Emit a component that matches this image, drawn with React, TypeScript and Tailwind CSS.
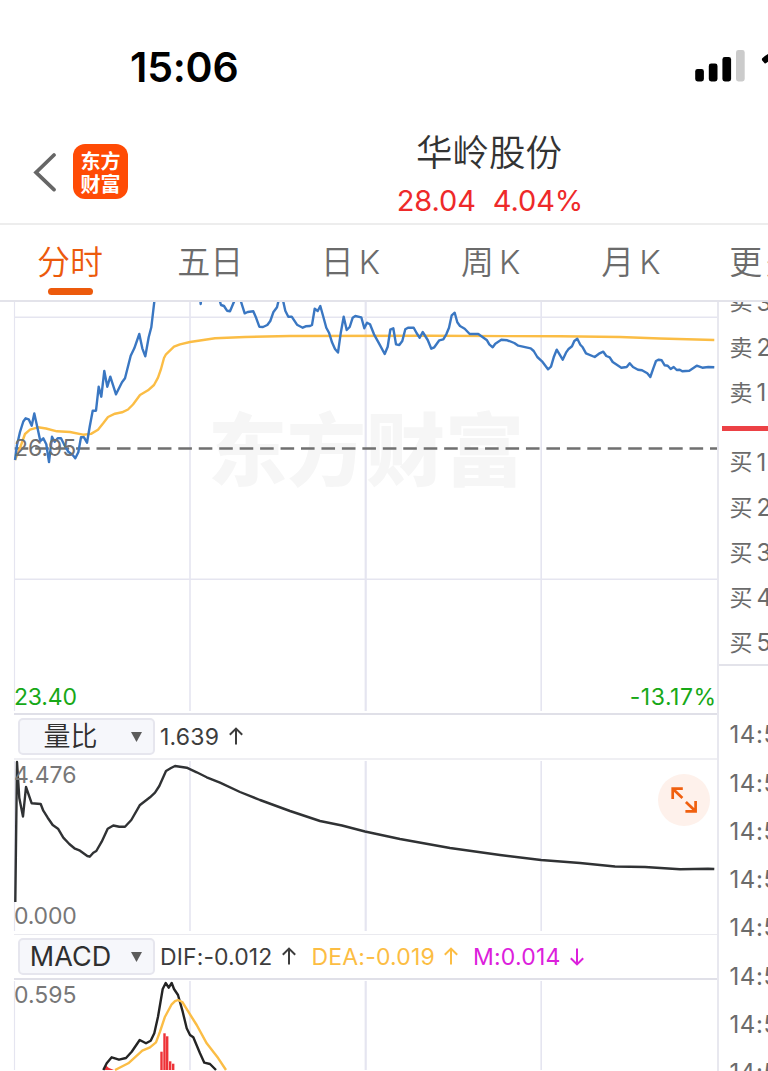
import type { ReactNode } from "react";

const tabs = ["五日", "日K", "周K", "月K"];
const asks = ["3", "2", "1"];
const bids = ["1", "2", "3", "4", "5"];
const ticks = ["14:59", "14:58", "14:58", "14:57", "14:56", "14:56", "14:55", "14:55"];
const macdBars = [
  [160.3, 1051.7],
  [163.3, 1033.3],
  [166, 1036.3],
  [169, 1061.3],
  [172, 1063.7],
];

const priceLine =
  "15,460 17,445 20,432 23.3,421.5 25.7,418.3 28.7,419.3 31.7,425.7 34.3,413.5 37,425.7 40.3,441 43.3,438.3 46.3,444.3 49,462 52,436.7 54.7,441.7 57.7,438.3 61,438.3 64,444.3 68.3,451.7 72.7,455 75.3,458.3 78.3,452.3 81,437.3 84,437.3 87,442.7 89.7,426.7 92.7,410.7 96,410.7 98.7,386.7 101.3,396.7 104.3,371 107.3,386.7 110.3,376.7 116,394.3 122,382.3 125,378.3 130.7,355.7 134.3,348.3 139.3,334 142.3,348.3 145.3,356.3 148.7,337.3 151.3,327.3 154.3,301.7 157,280 198,280 200.7,304 203,280 216,280 220,301.7 221,305 224,306 227,310.7 230,311.3 234,301.7 237,294 241,301.7 244.7,313.3 247.7,312 253.3,311.3 256.3,318.3 259.3,326.7 263,327 267.3,325 270.3,321 273.3,312.3 277,307.3 278.3,301.7 281,294 283.3,301.7 285.3,310.7 288.3,316.7 291.7,316.7 297,324.7 302.7,327.7 305.7,326.3 310,326 312,325 314.7,308.7 317.7,311 320.3,306 323.3,316.7 326.3,327.7 329,332.7 332,342.3 335,349 338,352.5 340.7,333.3 343.7,316.7 346.7,330 349.7,327 352.7,317.7 355.3,316 361.3,317.3 364.3,328.3 367,322.7 370,324.3 374,334.3 379,343.3 384.7,354 387.7,346.7 390.3,329.7 393.3,328.3 396,344.3 399.3,345 402.3,341 405.3,329.3 408,327.7 413.7,327.7 416.7,333.3 419.7,337.7 422.7,332 427.7,340 431.3,348.7 434.3,347.3 439.3,340.3 443.3,339.3 446.3,334.3 449,327.7 451.7,315.3 454.7,312.7 457.3,322.3 460,326 464.7,328.7 469.7,334 478.3,334 487,340.3 489.3,344.3 492.7,347.3 495.3,343.7 501.3,339.7 507.3,340.3 514.3,343 518.3,345.7 530.7,348.3 533.7,351 537.3,357 542,361.3 548,369.3 551,366.7 553.7,357.3 556.7,349.7 562.7,359.7 566,352.7 568.3,349.3 572,346.3 574.3,341 577.3,338.7 580.3,344.7 582.7,347.3 586,353.3 594.7,357 599,353.7 603.3,351.7 606.3,356 609.7,357.3 612.7,362 621.3,367.7 626.7,367 629.7,363.3 633,367 638,369.7 642,370.3 647.3,373.3 650.3,377 653.3,368.3 656,361 658.7,359.7 661.7,360.3 664.7,365.3 667.7,365.7 670.7,369 673.7,367 676.7,370 679.7,369.7 682.3,371.3 689.3,370.7 692.3,368.7 696.7,365.7 702.3,367.7 708.3,367 714.3,367.3";
const averageLine =
  "15,460 20,448 25,434 30,429.7 38,427.3 46,428.5 57,431.3 70,432 83,434.7 91,433.9 98,429.7 103,423.5 108,417 115,413.7 122,412.3 128,409.5 133,404.5 140,395 148,390.3 154,385 158,377.7 161,369 164,358 166,354.3 174,346.7 180,344.3 190,342 200,340.5 215,338.3 245,337 290,336 430,335.8 560,336.3 620,337 660,338.5 714.3,340";
const ratioLine =
  "15.3,902 17,762 19.3,798 23,816.5 26,787 31.7,803.3 40.7,804 43.3,810.7 47.7,817.7 52.7,825 58,828.7 63.3,837.7 69.3,844 75,848.7 80,850.7 87.3,856 89.7,856.7 93.3,852.7 96.3,851 101.7,841.7 107.7,828.7 113.3,825.5 119.3,826.7 125,826.7 131.3,820 139.7,805.3 150,797.3 155,792.7 159.3,786 166,771 171,768 175,766 186.7,767.7 196.7,772.3 206.7,777.3 220,782.7 240,792 260,800 290,811 320,821 342,825.5 365,831.5 400,839 450,848 500,855 541,860 580,863 615,866.5 645,867 680,869.3 708,868.7 714.3,869";
const difLine =
  "103.3,1070 106.7,1063.3 111.7,1057.3 119,1059.7 126,1058 131.7,1051.7 139.7,1040 146,1043.3 150.7,1040.7 154.3,1033.3 158,1016.7 162.7,989 165.7,983 168.7,987.7 171.7,983 174,989 178,995 182.7,1011.7 186.7,1028.3 190,1035 193.3,1037.3 200,1053.3 204.3,1062.7 210,1064 216,1070";
const deaLine =
  "115,1070 128.3,1063.3 142.3,1050.7 150,1047.3 156,1042.3 160,1031.7 165,1016.7 171.7,1004.3 175,1001.2 178,1000 182.3,1002 188.3,1011.7 196.7,1025 206.7,1043.3 218.3,1058.3 226,1070";

function GridLines({ top, bottom }: { top: number; bottom: number }) {
  return (
    <g stroke="#e5e5f0">
      <line x1="14.5" x2="14.5" y1={top} y2={bottom} strokeWidth="1.2" />
      <line x1="190" x2="190" y1={top} y2={bottom} strokeWidth="1.6" />
      <line x1="365.7" x2="365.7" y1={top} y2={bottom} strokeWidth="2.2" />
      <line x1="541.2" x2="541.2" y1={top} y2={bottom} strokeWidth="1.6" />
    </g>
  );
}

function Line({ points, color }: { points: string; color: string }) {
  return <polyline points={points} fill="none" stroke={color} strokeWidth="2.4" strokeLinejoin="round" />;
}

function Arrow({ down = false }: { down?: boolean }) {
  return (
    <svg
      viewBox="0 0 14 18"
      className={down ? "h-[18px] w-[14px] rotate-180" : "mb-[2px] h-[18px] w-[14px]"}
      fill="none"
      stroke="currentColor"
      strokeWidth="2"
    >
      <path d="M7 17.5V1.5M.8 7.8 7 1.6l6.2 6.2" />
    </svg>
  );
}

function IndicatorBar({ name, children }: { name: ReactNode; children: ReactNode }) {
  return (
    <div className="flex h-[43px] items-center pl-[18px] text-[23px]">
      <button className="flex h-[37px] w-[137px] items-center rounded-[5px] border-2 border-[#e6e6ee] bg-[#f6f7fb] text-[#2f2f2f]">
        <span className="flex w-[101px] justify-center">{name}</span>
        <svg viewBox="0 0 11 10" className="ml-[10px] h-[10px] w-[11px] fill-[#5c5c5c]">
          <path d="M0 0h11L5.5 10z" />
        </svg>
      </button>
      {children}
    </div>
  );
}

export default function App() {
  return (
    <div className="h-[1071px] w-[768px] overflow-hidden bg-white font-['Inter','Noto_Sans_CJK_SC',sans-serif] text-[#6b6b6b]">
      <div className="flex h-[110px] items-start justify-between pl-[130px] text-black">
        <span className="mt-[42px] text-[41px] leading-[50px] font-semibold tracking-[-0.2px]">15:06</span>
        <svg viewBox="0 0 74 32" className="mt-[50px] h-8 w-[74px]">
          <rect x="1.2" y="19" width="8.7" height="12.5" rx="2.4" />
          <rect x="14.8" y="13.6" width="8.7" height="17.9" rx="2.4" />
          <rect x="28.4" y="7" width="8.7" height="24.5" rx="2.4" />
          <rect x="42" width="8.7" height="31.5" rx="2.4" fill="#cbcbcb" />
          <path d="M68.3 8.3Q71 5.5 75 3.5v7.5l-2.8 2.1q-1 .7-1.8-.2l-2.2-2.5q-.7-1 .1-2.1z" />
        </svg>
      </div>

      <header className="flex h-[115px] border-b-2 border-[#ededed]">
        <div className="flex w-[128px] shrink-0 items-start pl-[33px]">
          <svg viewBox="0 0 24 40" className="mt-[42px] h-10 w-6" fill="none" stroke="#666" strokeWidth="3.7" strokeLinecap="round">
            <path d="M21 3 3 20.4 21 37.6" strokeLinejoin="miter" />
          </svg>
          <div className="mt-[34px] ml-4 flex h-[55px] w-[55px] shrink-0 items-center justify-center rounded-[12px] bg-[#ff4b05] font-['Noto_Sans_CJK_SC',sans-serif] text-[20px] leading-[23px] font-bold text-white">
            <span className="w-10">东方财富</span>
          </div>
        </div>
        <div className="flex w-[722px] shrink-0 flex-col items-center">
          <h1 className="mt-[21px] text-[36.5px] leading-[44px] font-[350] text-[#333]">华岭股份</h1>
          <p className="mt-[9px] ml-[2px] flex gap-[17px] text-[29px] leading-[34px] tracking-[-0.1px] text-[#ee2a2a]">
            <span>28.04</span>
            <span>4.04%</span>
          </p>
        </div>
      </header>

      <nav className="flex h-[77px] border-b-2 border-[#e3e3ea] text-[33px] leading-[48px] font-[350]">
        <div className="flex w-[140px] shrink-0 flex-col items-center pt-[13px] text-[#ec5a0c]">
          <span>分时</span>
          <i className="mt-[2px] h-[7px] w-[45px] rounded-full bg-[#ec5a0c]" />
        </div>
        {tabs.map((tab) => (
          <div key={tab} className="w-[140.3px] shrink-0 pt-[13px] text-center">
            {tab.replace("K", "")}
            {tab.includes("K") && <span className="ml-[5px] text-[33px]">K</span>}
          </div>
        ))}
        <div className="shrink-0 pt-[13px] pl-[28px] tracking-[2.5px]">更多</div>
      </nav>

      <div className="flex h-[769px] overflow-hidden">
        <main className="w-[718.5px] shrink-0 border-r-2 border-[#e8e8ef] text-[23px] leading-[28px]">
          <section className="relative h-[411px]">
            <svg viewBox="0 302 717 411" className="block h-[411px] w-[717px]">
              <text x="208" y="480" fontSize="79" fontWeight="900" fill="#f6f6f6" fontFamily="Noto Sans CJK SC">
                东方财富
              </text>
              <GridLines top={302} bottom={711} />
              <path d="M14 317.2H717M14 579.2H717" stroke="#e5e5f0" strokeWidth="1.6" />
              <path d="M14.7 448.5H717" stroke="#707070" strokeWidth="2.4" strokeDasharray="13.6 6.85" />
              <Line points={averageLine} color="#fbbd45" />
              <Line points={priceLine} color="#3a77c2" />
            </svg>
            <span className="absolute top-[132px] left-[14px] text-[#707070]">26.95</span>
            <span className="absolute top-[381px] left-[14px] tracking-[-0.2px] text-[#17a817]">23.40</span>
            <span className="absolute top-[381px] right-0 tracking-[0.5px] text-[#17a817]">-13.17%</span>
          </section>

          <div className="ml-[14px] h-[2px] bg-[#e0e0e8]" />
          <IndicatorBar name={<span className="text-[27px] font-[350]">量比</span>}>
            <div className="ml-[5px] flex items-center gap-[10px] tracking-[0.2px] text-[#3d3d3d]">
              1.639 <Arrow />
            </div>
          </IndicatorBar>
          <div className="ml-[14px] h-[2px] bg-[#efeff3]" />

          <section className="relative h-[174px]">
            <svg viewBox="0 760 717 174" className="block h-[174px] w-[717px]">
              <GridLines top={761} bottom={931} />
              <Line points={ratioLine} color="#303234" />
            </svg>
            <span className="absolute top-[1px] left-[14px] text-[#777]">4.476</span>
            <span className="absolute top-[142px] left-[14px] tracking-[-0.2px] text-[#777]">0.000</span>
            <button className="absolute top-[14px] left-[658px] flex size-[52px] items-center justify-center rounded-full bg-[#fef1eb]">
              <svg viewBox="0 0 28 28" className="size-7" fill="none" stroke="#f0600f" strokeWidth="2.7">
                <path d="M12.8 2.6H2.7V13M3 3l9.4 9M15.4 25.3h10.2V14.9M25.3 25l-9.4-9" />
              </svg>
            </button>
          </section>

          <div className="ml-[14px] h-px bg-[#eaeaef]" />
          <IndicatorBar name={<span className="text-[27px]">MACD</span>}>
            <div className="ml-[5px] flex items-center gap-[10px] tracking-[0.1px] text-[#3d3d3d]">
              DIF:-0.012 <Arrow />
            </div>
            <div className="ml-[15px] flex items-center gap-[9px] tracking-[0.2px] text-[#fcbd43]">
              DEA:-0.019 <Arrow />
            </div>
            <div className="ml-[15px] flex items-center gap-[9px] tracking-[0.2px] text-[#dc20dc]">
              M:0.014 <Arrow down />
            </div>
          </IndicatorBar>
          <div className="ml-[14px] h-[2px] bg-[#e0e0e8]" />

          <section className="relative h-[91px]">
            <svg viewBox="0 980 717 91" className="block h-[91px] w-[717px]">
              <GridLines top={981} bottom={1070} />
              <g fill="#ee3338">
                <path d="M103 1070l3-4.5 3 2.5 5 2z" />
                {macdBars.map(([x, y]) => (
                  <rect key={x} x={x} y={y} width="2.4" height={1070 - y} />
                ))}
              </g>
              <Line points={difLine} color="#242424" />
              <Line points={deaLine} color="#fbbd45" />
            </svg>
            <span className="absolute top-[1px] left-[14px] text-[#777]">0.595</span>
          </section>
        </main>

        <aside className="w-[120px] shrink-0 text-[24px]">
          <div className="-mt-[22px] pl-[11px]">
            {asks.map((n) => (
              <div key={n} className="flex h-[45.2px] items-center gap-[4px]">
                <span className="text-[23px]">卖</span>
                {n}
              </div>
            ))}
          </div>
          <div className="mt-[10px] ml-[3px] h-[5.5px] bg-[#ec4145]" />
          <div className="h-[235px] border-b-2 border-[#e3e3ea] pt-[9px] pl-[11px]">
            {bids.map((n) => (
              <div key={n} className="flex h-[45.2px] items-center gap-[4px]">
                <span className="text-[23px]">买</span>
                {n}
              </div>
            ))}
          </div>
          <div className="pt-[45px] pl-[11px] tracking-[0.6px]">
            {ticks.map((time, i) => (
              <div key={i} className="flex h-[48.3px] items-center">
                {time}
              </div>
            ))}
          </div>
        </aside>
      </div>
    </div>
  );
}
